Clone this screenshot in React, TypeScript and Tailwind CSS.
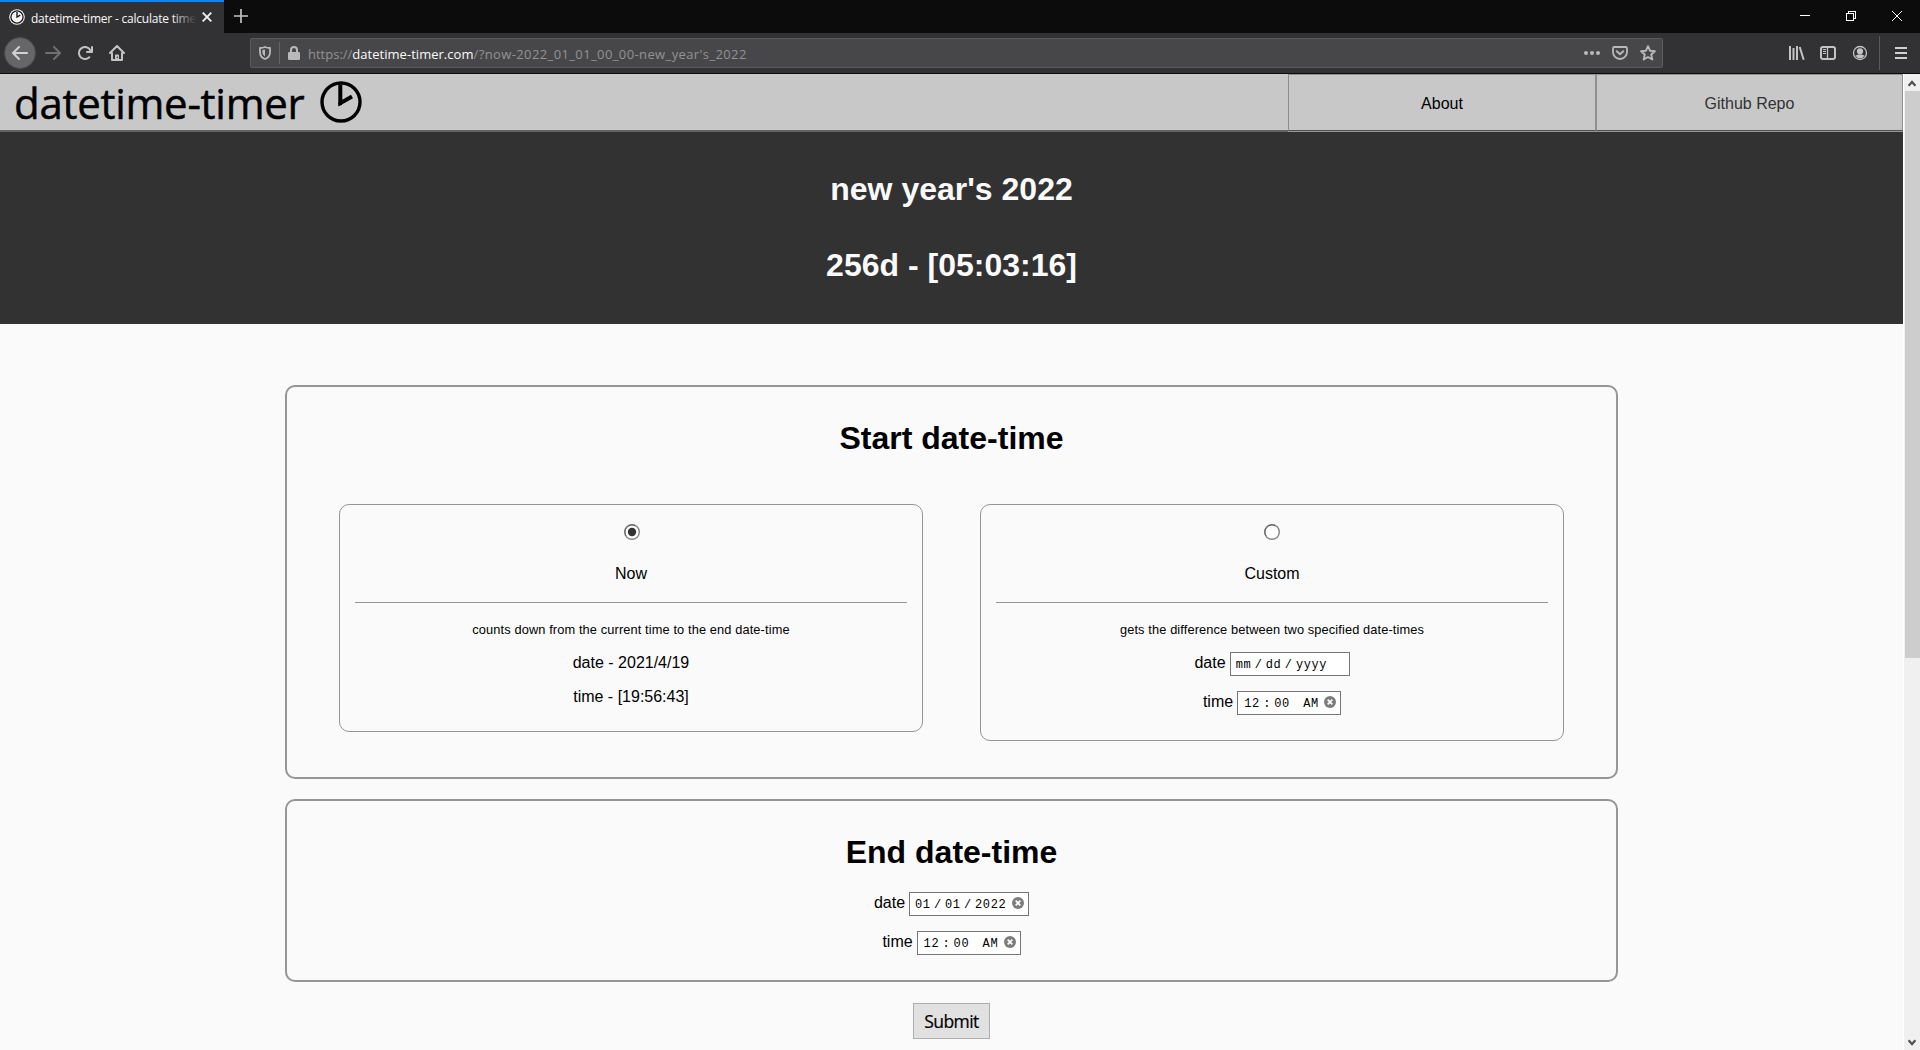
import React from "react";

const UI = "font-['Open_Sans','Noto_Sans',sans-serif]";

function ClockIcon({ className }: { className: string }) {
  return (
    <svg className={className} viewBox="0 0 42 42" fill="none" stroke="#000">
      <circle cx="21" cy="21" r="19" strokeWidth="3.4" />
      <path d="M20.3 3.500v18.700L32 15.600" strokeWidth="4" />
      <circle cx="20.300" cy="22.400" r="2" fill="#000" stroke="none" />
    </svg>
  );
}

function TabStrip() {
  return (
    <div className="flex h-[33px] bg-[#0c0c0d]">
      <div className="flex h-[33px] w-[224px] items-center border-t-2 border-[#0a84ff] bg-[#323234] pb-[2px] pl-[9px]">
        <svg className="h-4 w-4 shrink-0" viewBox="0 0 16 16" fill="none">
          <circle cx="8" cy="8" r="7.8" fill="#f4f4f4" />
          <circle cx="8" cy="8" r="6.1" stroke="#1a1a1a" strokeWidth="1.3" />
          <path d="M8 3v5l3.300-1.800" stroke="#1a1a1a" strokeWidth="1.4" />
        </svg>
        <div className="relative ml-[6px] w-[165px] overflow-hidden whitespace-nowrap">
          <span className={`${UI} text-[12px] leading-[20px] tracking-[-0.22px] text-[#f9f9fa]`}>datetime-timer - calculate time</span>
          <div className="absolute top-0 right-0 h-full w-6 bg-linear-to-r from-transparent to-[#323234]" />
        </div>
        <svg className="ml-[6px] h-[10px] w-[10px]" viewBox="0 0 10 10" stroke="#f0f0f1" strokeWidth="1.9">
          <path d="M.7.7l8.6 8.6M9.3.7L.7 9.3" />
        </svg>
      </div>
      <svg className="mt-[9px] ml-[10px] h-[14px] w-[14px]" viewBox="0 0 14 14" stroke="#c4c4c5" strokeWidth="1.7">
        <path d="M7 0v14M0 7h14" />
      </svg>
      <div className="mt-[11px] ml-auto flex gap-[36px] pr-[18px]">
        <svg className="h-[10px] w-[10px]" viewBox="0 0 10 10" stroke="#fff" shapeRendering="crispEdges">
          <path d="M0 4.5h10" />
        </svg>
        <svg className="h-[10px] w-[10px]" viewBox="0 0 10 10" stroke="#fff" fill="none" shapeRendering="crispEdges">
          <path d="M.5 2.5h7v7h-7zM2.5 2V.5h7v7H8" />
        </svg>
        <svg className="h-[10px] w-[10px]" viewBox="0 0 10 10" stroke="#fff" strokeWidth="1">
          <path d="M0 0l10 10M10 0L0 10" />
        </svg>
      </div>
    </div>
  );
}

function ToolBar() {
  return (
    <div className="flex h-[41px] items-center border-b border-[#0c0c0d] bg-[#323234] pl-[4px]">
      <div className="flex h-8 w-8 items-center justify-center rounded-full border border-[#4b4b4d] bg-[#666668]">
        <svg className="h-4 w-4" viewBox="0 0 16 16" fill="#d2d2d3">
          <path d="M15 7H3.414l4.293-4.293a1 1 0 0 0-1.414-1.414l-6 6a1 1 0 0 0 0 1.414l6 6a1 1 0 0 0 1.414-1.414L3.414 9H15a1 1 0 0 0 0-2z" />
        </svg>
      </div>
      <svg className="ml-[9px] h-4 w-4 -scale-x-100" viewBox="0 0 16 16" fill="#6f6f71">
        <path d="M15 7H3.414l4.293-4.293a1 1 0 0 0-1.414-1.414l-6 6a1 1 0 0 0 0 1.414l6 6a1 1 0 0 0 1.414-1.414L3.414 9H15a1 1 0 0 0 0-2z" />
      </svg>
      <svg className="ml-[16px] h-4 w-4" viewBox="0 0 16 16" fill="#c3c3c4">
        <path d="M15 1a1 1 0 0 0-1 1v2.418A6.995 6.995 0 1 0 8 15a6.954 6.954 0 0 0 4.95-2.05 1 1 0 0 0-1.414-1.414A5.019 5.019 0 1 1 12.549 6H10a1 1 0 0 0 0 2h5a1 1 0 0 0 1-1V2a1 1 0 0 0-1-1z" />
      </svg>
      <svg className="ml-[16px] h-4 w-4" viewBox="0 0 16 16" fill="none" stroke="#c3c3c4" strokeWidth="2" strokeLinecap="round" strokeLinejoin="round">
        <path d="M1 8l7-7 7 7M3 8v7h10V8" />
        <path d="M6 15V10.2a.7.7 0 0 1 .7-.7h2.6a.7.7 0 0 1 .7.7V15z" fill="#c3c3c4" stroke="none" />
        <path d="M8.3 12.2v.3" strokeWidth="1.2" stroke="#323234" />
      </svg>
      <div className="ml-[125px] flex h-[30px] w-[1413px] items-center rounded-[2px] border border-[#5a5a5c] bg-[#474749] pl-[8px]">
        <svg className="h-[14px] w-[12px]" viewBox="0 0 12 14" fill="none">
          <path d="M6 1C4.5 1.6 3 1.9 1 2v4.2C1 9.500 2.700 11.800 6 13c3.300-1.200 5-3.500 5-6.800V2C9 1.900 7.500 1.600 6 1z" stroke="#b9b9ba" strokeWidth="1.8" strokeLinejoin="round" />
          <path d="M6 3.600v6.800c-1.700-.9-2.600-2.300-2.600-4.300V4.100C4.400 4 5.200 3.900 6 3.600z" fill="#b9b9ba" />
        </svg>
        <div className="ml-[8px] h-[22px] w-px bg-[#656567]" />
        <svg className="ml-[8px] h-[14px] w-[12px]" viewBox="0 0 12 14">
          <path d="M3 7V4a3 3 0 0 1 6 0v3" fill="none" stroke="#b9b9ba" strokeWidth="2" />
          <rect x="0" y="6" width="12" height="8" rx="1.300" fill="#b9b9ba" />
        </svg>
        <div className={`${UI} ml-[8px] pt-px text-[13px] leading-[20px] whitespace-nowrap text-[#929294]`}>
          <span>https://</span>
          <span className="tracking-[0.030px] text-[#f9f9fa]">datetime-timer.com</span>
          <span className="tracking-[0.390px]">/?now-2022_01_01_00_00-new_year's_2022</span>
        </div>
        <div className="ml-auto flex items-center gap-[12px] pr-[6px]">
          <svg className="h-4 w-4" viewBox="0 0 16 16" fill="#b9b9ba">
            <circle cx="2" cy="8" r="2" />
            <circle cx="8" cy="8" r="2" />
            <circle cx="14" cy="8" r="2" />
          </svg>
          <svg className="h-4 w-4" viewBox="0 0 16 16" fill="none" stroke="#b9b9ba" strokeWidth="2" strokeLinecap="round" strokeLinejoin="round">
            <path d="M2.200 2h11.600a1.200 1.200 0 0 1 1.200 1.200V7A7 7 0 0 1 1 7V3.200A1.200 1.200 0 0 1 2.200 2z" strokeWidth="1.800" />
            <path d="M4.800 6.300L8 9.300l3.200-3" />
          </svg>
          <svg className="h-4 w-4" viewBox="0 0 16 16" fill="none" stroke="#b9b9ba" strokeWidth="1.900" strokeLinejoin="round">
            <path d="M8 1.200l2 4.500 4.900.5-3.700 3.300 1.100 5L8 12l-4.300 2.500 1.100-5L1.100 6.200 6 5.700z" />
          </svg>
        </div>
      </div>
      <div className="ml-auto flex items-center pr-[13px]">
        <svg className="h-4 w-4" viewBox="0 0 16 16" stroke="#c3c3c4" strokeWidth="2" fill="none">
          <path d="M1 1v14M4.500 3v12M8 1v14M10.700 2l4 12.800" strokeWidth="2" />
        </svg>
        <svg className="ml-[15px] h-4 w-4" viewBox="0 0 16 16" fill="none" stroke="#c3c3c4">
          <rect x="1" y="2" width="14" height="12" rx="2" strokeWidth="2" />
          <path d="M7.500 2v12" strokeWidth="1.300" />
          <path d="M3 4.500h3M3 6.500h3M3 8.500h3" />
        </svg>
        <svg className="ml-[16px] h-4 w-4" viewBox="0 0 16 16" fill="none">
          <circle cx="8" cy="8" r="6.500" stroke="#c3c3c4" strokeWidth="1.300" />
          <circle cx="8" cy="6.300" r="3.100" fill="#c3c3c4" />
          <path d="M3.400 10.500c1.400-.3 2-.6 2.500-1h4.200c.5.400 1.100.7 2.500 1A5.300 5.300 0 0 1 8 13.300a5.300 5.300 0 0 1-4.600-2.800z" fill="#c3c3c4" />
        </svg>
        <div className="ml-[11px] h-[34px] w-px bg-[#59595b]" />
        <svg className="ml-[15px] h-[14px] w-[12px]" viewBox="0 0 12 14" stroke="#d0d0d1" strokeWidth="2">
          <path d="M0 2h12M0 7h12M0 12h12" />
        </svg>
      </div>
    </div>
  );
}

function Clear() {
  return (
    <svg className="mb-[3px] ml-auto h-3 w-3 shrink-0" viewBox="0 0 12 12">
      <circle cx="6" cy="6" r="6" fill="#7d7d7d" />
      <path d="M3.700 3.700l4.600 4.600M8.300 3.700L3.700 8.300" stroke="#fff" strokeWidth="1.700" />
    </svg>
  );
}

const FIELD =
  "flex h-6 items-center border border-[#767676] bg-white pr-[4px] pt-px font-['Liberation_Mono',monospace] text-[12px] leading-[20px] tracking-[0.600px] text-black";

function DateField({ parts, clear }: { parts: string[]; clear?: boolean }) {
  return (
    <div className={`${FIELD} ml-[4px] w-[120px]`}>
      <span className="ml-[5px] w-[16px]">{parts[0]}</span>
      <span className="ml-[3px] w-[8px]">/</span>
      <span className="ml-[3px] w-[16px]">{parts[1]}</span>
      <span className="ml-[3px] w-[8px]">/</span>
      <span className="ml-[3px] w-[32px]">{parts[2]}</span>
      {clear && <Clear />}
    </div>
  );
}

function TimeField() {
  return (
    <div className={`${FIELD} ml-[4px] w-[104px]`}>
      <span className="ml-[6px] w-[16px]">12</span>
      <span className="ml-[3px] w-[8px]">:</span>
      <span className="ml-[3px] w-[16px]">00</span>
      <span className="ml-[13px] w-[16px]">AM</span>
      <Clear />
    </div>
  );
}

function Fields({ parts, clear }: { parts: string[]; clear?: boolean }) {
  return (
    <>
      <div className="flex h-6 justify-center">
        <span className="leading-[21px]">date</span>
        <DateField parts={parts} clear={clear} />
      </div>
      <div className="mt-[15px] flex h-6 justify-center">
        <span className="leading-[21px]">time</span>
        <TimeField />
      </div>
    </>
  );
}

function Card({ title, note, checked, className, children }: { title: string; note: string; checked?: boolean; className: string; children: React.ReactNode }) {
  return (
    <div className={`${className} w-[584px] rounded-[10px] border border-[#969696] px-[15px] pt-[19px] text-center`}>
      <div className={checked ? "pl-[2px]" : ""}>
        <svg className="mx-auto h-4 w-4" viewBox="0 0 16 16">
          <circle cx="8" cy="8" r="7.300" fill="#fff" stroke="#858585" strokeWidth="1.400" />
          <path d="M2.300 12.200A7.200 7.200 0 0 1 11 1.500" fill="none" stroke="#444" strokeWidth=".7" />
          {checked && <circle cx="8" cy="8" r="4.200" fill="#333" />}
        </svg>
      </div>
      <div className="mt-[24px] leading-5">{title}</div>
      <div className="mt-[18px] h-px bg-[#969696]" />
      <div className="mt-[17px] text-[12.800px] leading-5 tracking-[0.120px]">{note}</div>
      {children}
    </div>
  );
}

function Page() {
  return (
    <div className="h-full w-[1903px] overflow-hidden bg-[#fafafa] font-['Liberation_Sans',Arial,sans-serif] text-[16px] text-black">
      <div className="flex h-[58px] bg-[#c8c8c8]">
        <div className="flex flex-1 items-center border-b-2 border-[#646464] pl-[14px]">
          <span className={`${UI} w-[306px] pt-px text-[42px] leading-[55px] tracking-[-0.280px] whitespace-nowrap [-webkit-text-stroke:0.500px_#000]`}>datetime-timer</span>
          <ClockIcon className="h-[42px] w-[42px]" />
        </div>
        <div className="flex w-[308px] border-b border-[#969696]">
          <div className="flex-1 border border-[#8f8f8f] border-b-[#505050] text-center leading-[57px]">About</div>
        </div>
        <div className="flex w-[307px] border-b border-[#969696]">
          <div className="flex-1 border border-[#8f8f8f] border-b-[#505050] text-center leading-[57px] text-[#323232]">Github Repo</div>
        </div>
      </div>
      <div className="h-[192px] bg-[#323232] pt-[39px] text-center text-[32px] leading-9 font-bold text-[#fafafa]">
        <h1>new year's 2022</h1>
        <h1 className="mt-[40px]">256d - [05:03:16]</h1>
      </div>
      <div className="mt-[61px] ml-[285px] h-[394px] w-[1333px] rounded-[10px] border-2 border-[#969696] px-[52px] pt-[33px]">
        <h1 className="text-center text-[32px] leading-9 font-bold">Start date-time</h1>
        <div className="mt-[48px] flex items-start justify-between">
          <Card title="Now" note="counts down from the current time to the end date-time" checked className="h-[228px]">
            <div className="mt-[13px] leading-5">date - 2021/4/19</div>
            <div className="mt-[14px] leading-5">time - [19:56:43]</div>
          </Card>
          <Card title="Custom" note="gets the difference between two specified date-times" className="h-[237px]">
            <div className="mt-[12px]">
              <Fields parts={["mm", "dd", "yyyy"]} />
            </div>
          </Card>
        </div>
      </div>
      <div className="mt-[20px] ml-[285px] h-[183px] w-[1333px] rounded-[10px] border-2 border-[#969696] pt-[33px]">
        <h1 className="mb-[22px] text-center text-[32px] leading-9 font-bold">End date-time</h1>
        <Fields parts={["01", "01", "2022"]} clear />
      </div>
      <button className={`${UI} mt-[21px] ml-[913px] block h-[36px] w-[77px] border border-[#adadad] bg-[#e1e1e1] text-[17.500px] leading-[34px] tracking-[-0.550px] [-webkit-text-stroke:0.200px_#000]`}>Submit</button>
    </div>
  );
}

function ScrollBar() {
  return (
    <div className="flex flex-1 flex-col items-center border-l border-white bg-[#f0f0f0]">
      <svg className="mt-[6px] h-[7px] w-[8px]" viewBox="0 0 8 7" fill="none" stroke="#505050" strokeWidth="2.200">
        <path d="M.6 5.700L4 2l3.400 3.700" />
      </svg>
      <div className="mt-[4px] h-[567px] w-[15px] bg-[#cdcdcd]" />
      <svg className="mt-auto mb-[4px] h-[7px] w-[8px]" viewBox="0 0 8 7" fill="none" stroke="#505050" strokeWidth="2.200">
        <path d="M.6 1.300L4 5l3.400-3.700" />
      </svg>
    </div>
  );
}

export default function App() {
  return (
    <div className="flex h-[1050px] w-[1920px] flex-col overflow-hidden">
      <TabStrip />
      <ToolBar />
      <div className="flex h-[976px]">
        <Page />
        <ScrollBar />
      </div>
    </div>
  );
}
